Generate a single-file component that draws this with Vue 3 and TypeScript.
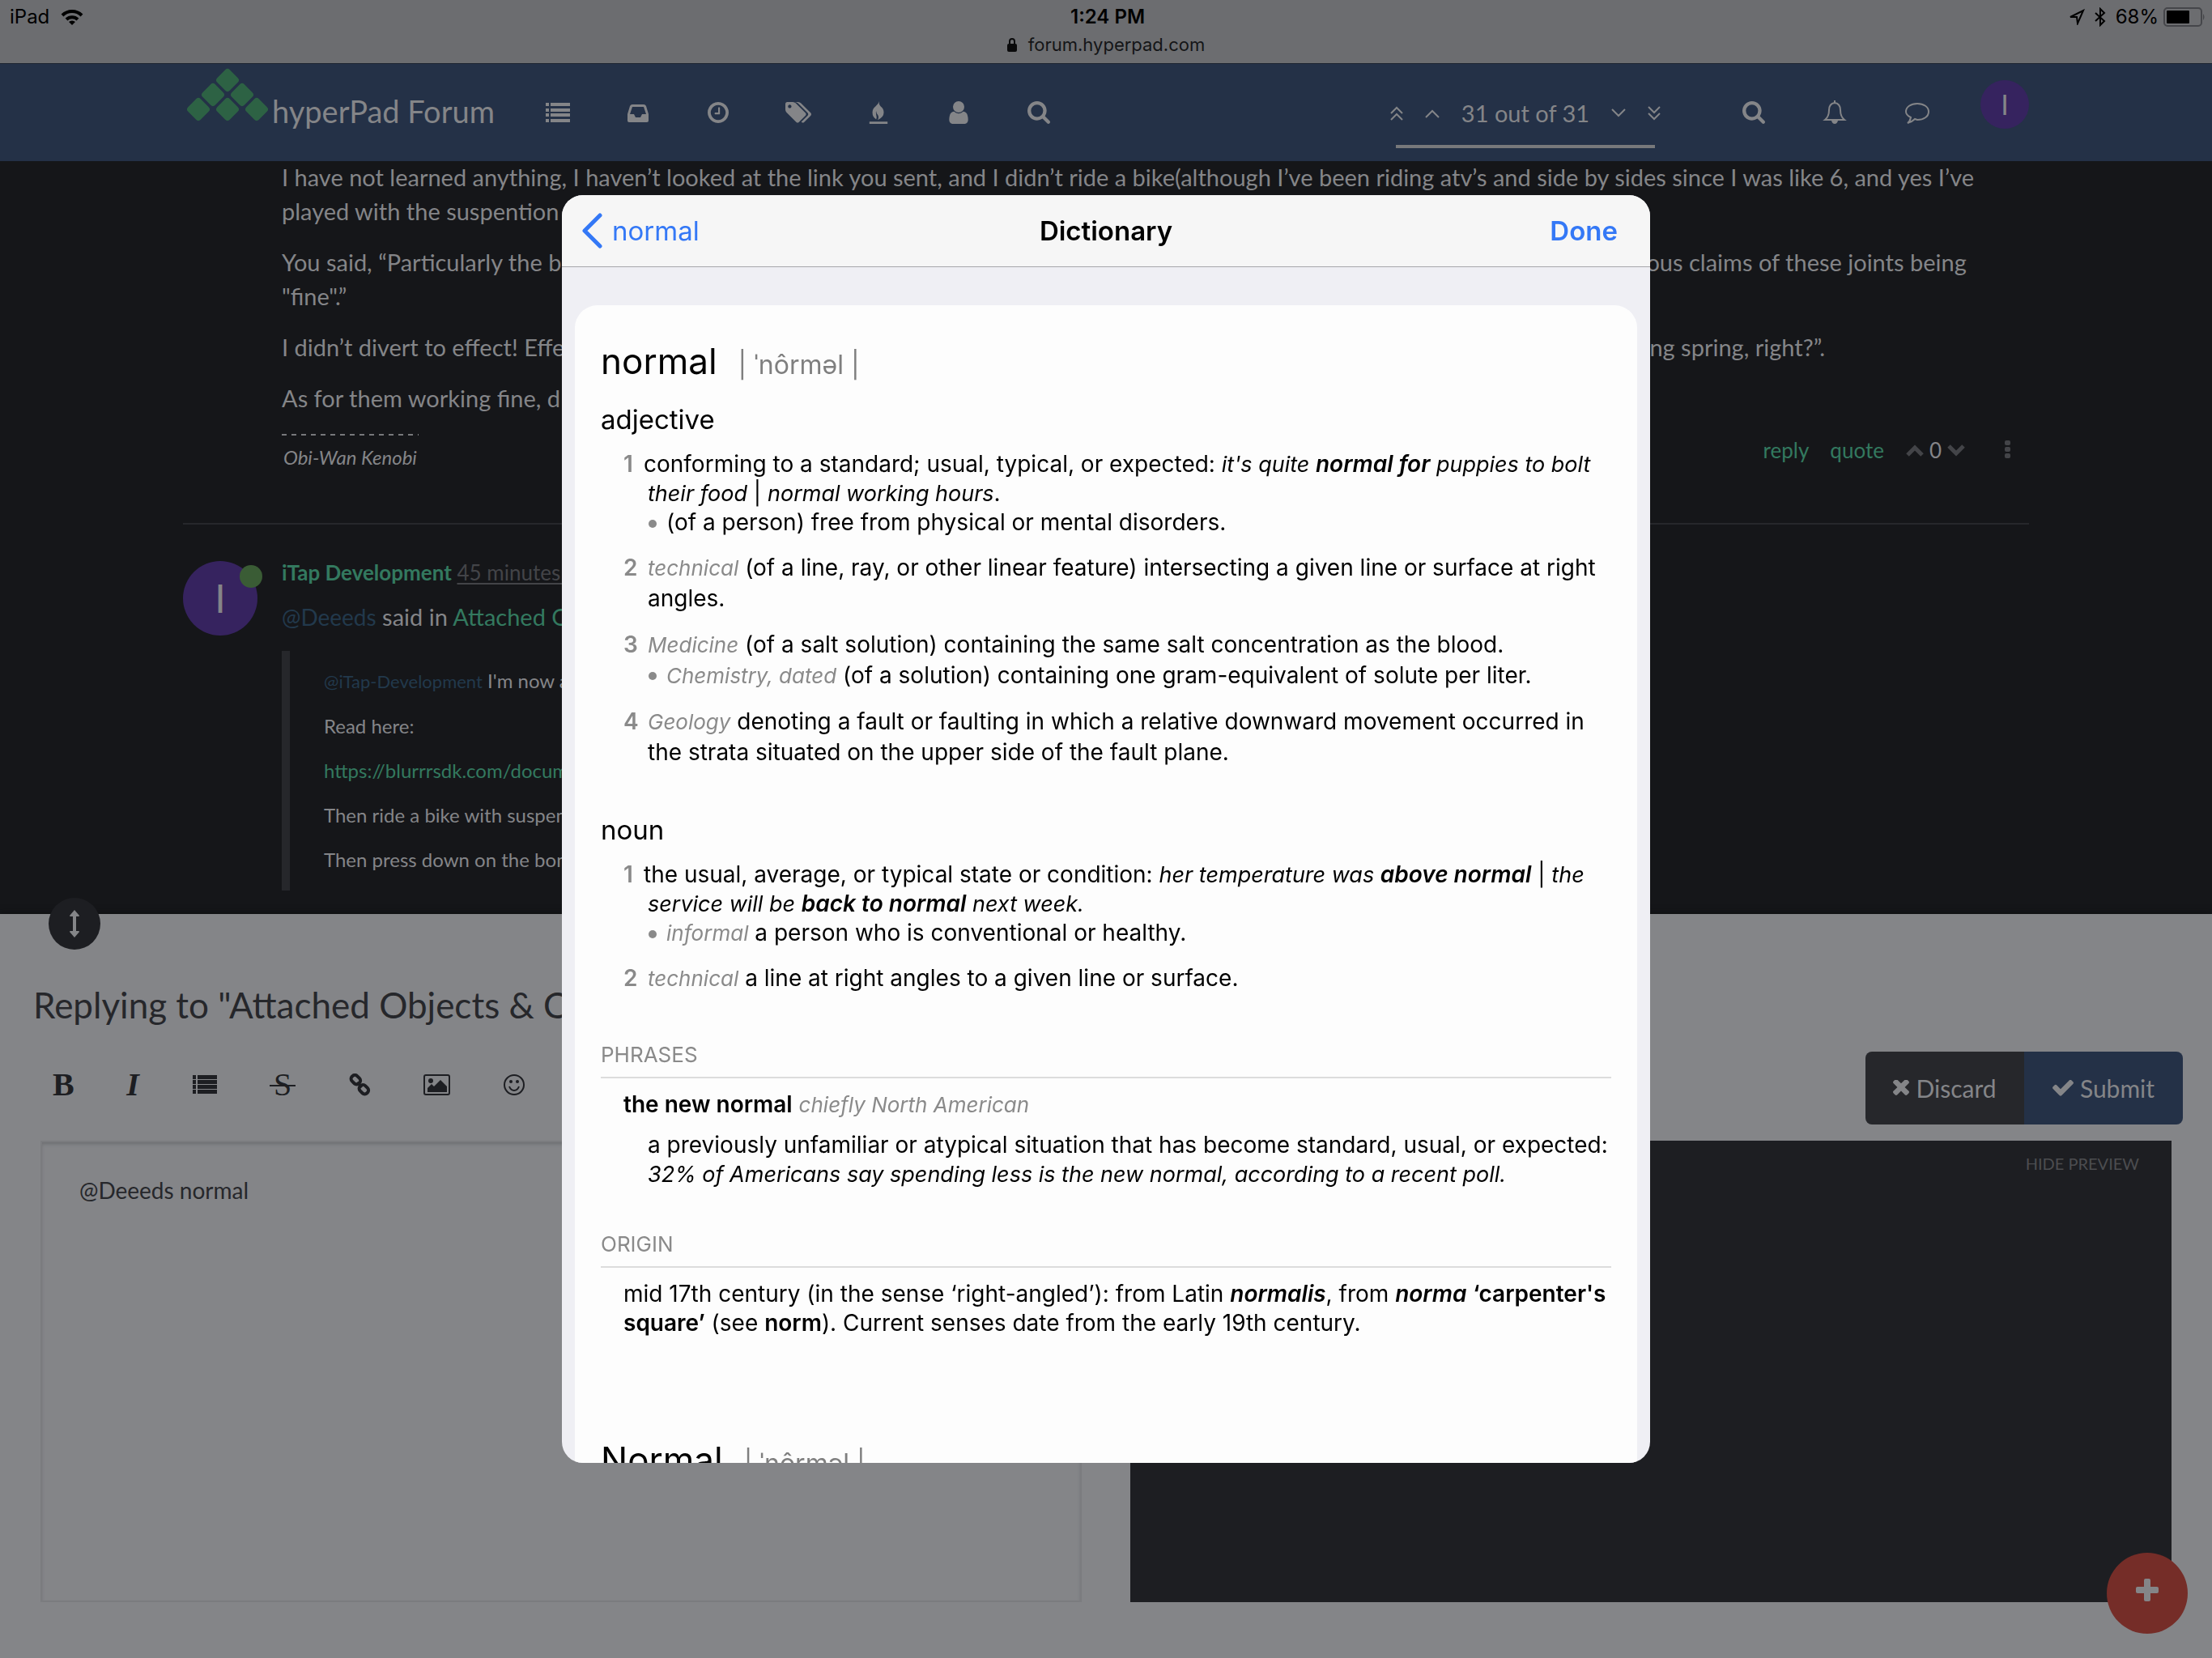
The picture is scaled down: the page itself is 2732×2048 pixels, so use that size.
<script setup lang="ts">
import { ref } from 'vue'

interface Glyph {
  name: string
  box: string
  w: number
  d: string
}

const navItems: Glyph[] = [
  { name: 'Categories', box: '0 0 30 26', w: 30, d: 'M0 1h4v4H0zM6 1h24v4H6zM0 8h4v4H0zM6 8h24v4H6zM0 14h4v4H0zM6 14h24v4H6zM0 21h4v4H0zM6 21h24v4H6z' },
  { name: 'Unread', box: '0 0 26 26', w: 26, d: 'M6 3h14q2 0 3 2l3 10v8q0 2-2 2H2q-2 0-2-2v-8L3 5q1-2 3-2zM6 6 3 15h5l2 4h6l2-4h5l-3-9z' },
  { name: 'Recent', box: '128 128 1536 1536', w: 26, d: 'M1024 544v448q0 14-9 23t-23 9h-320q-14 0-23-9t-9-23v-64q0-14 9-23t23-9h224v-352q0-14 9-23t23-9h64q14 0 23 9t9 23zm416 352q0-148-73-273t-198-198-273-73-273 73-198 198-73 273 73 273 198 198 273 73 273-73 198-198 73-273zm224 0q0 209-103 385.5t-279.5 279.5-385.5 103-385.5-103-279.5-279.5-103-385.5 103-385.5 279.5-279.5 385.5-103 385.5 103 279.5 279.5 103 385.5z' },
  { name: 'Tags', box: '128 128 1900 1536', w: 32, d: 'M576 448q0-53-37.5-90.5t-90.5-37.5-90.5 37.5-37.5 90.5 37.5 90.5 90.5 37.5 90.5-37.5 37.5-90.5zm1067 576q0 53-37 90l-491 492q-39 37-91 37-53 0-90-37l-715-716q-38-37-64.5-101t-26.5-117v-416q0-52 38-90t90-38h416q53 0 117 26.5t102 64.5l715 714q37 39 37 91zm384 0q0 53-37 90l-491 492q-39 37-91 37-36 0-59-14t-53-45l470-470q37-37 37-90 0-52-37-91l-715-714q-38-38-102-64.5t-117-26.5h224q53 0 117 26.5t102 64.5l715 714q37 39 37 91z' },
  { name: 'Popular', box: '0 0 24 30', w: 24, d: 'M0 27h24v3H0zM13 0q-1 4 2 7 4 3 4 8 0 6-8 10 2-4 0-7-2-2-2-5-1 2 0 5 1 3 0 6-5-3-5-9 0-5 4-8 4-3 5-7z' },
  { name: 'Users', box: '256 128 1280 1536', w: 24, d: 'M1536 1399q0 109-62.5 187t-150.5 78h-854q-88 0-150.5-78t-62.5-187q0-85 8.5-160.5t31.5-152 58.5-131 94-89 134.5-34.5q131 128 313 128t313-128q76 0 134.5 34.5t94 89 58.5 131 31.5 152 8.5 160.5zm-256-887q0 159-112.5 271.5t-271.5 112.5-271.5-112.5-112.5-271.5 112.5-271.5 271.5-112.5 271.5 112.5 112.5 271.5z' },
]
const searchPath =
  'M1216 832q0-185-131.5-316.5t-316.5-131.5-316.5 131.5-131.5 316.5 131.5 316.5 316.5 131.5 316.5-131.5 131.5-316.5zm512 832q0 52-38 90t-90 38q-54 0-90-38l-343-342q-179 124-399 124-143 0-273.5-55.5t-225-150-150-225-55.5-273.5 55.5-273.5 150-225 225-150 273.5-55.5 273.5 55.5 225 150 150 225 55.5 273.5q0 220-124 399l343 343q37 37 37 90z'
const diamonds = [
  [51, 15], [33, 33], [69, 33], [15, 51], [51, 51], [87, 51],
]
const draft = ref('@Deeeds normal')
</script>

<template>
  <div class="page">
    <div class="status">
      <div class="status-row">
        <span class="side">iPad
          <svg width="28" height="21" viewBox="0 0 28 21" fill="none" stroke="#000" stroke-width="4"><path d="M2 8a17 17 0 0 1 24 0M7 13a10 10 0 0 1 14 0" /><path d="M14 20l-4-4a6 6 0 0 1 8 0z" fill="#000" stroke="none" /></svg>
        </span>
        <strong class="clock">1:24 PM</strong>
        <span class="side right">
          <svg width="20" height="20" viewBox="0 0 20 20" fill="none" stroke="#000" stroke-width="2"><path d="M2 10 18 2 11 18 10 10z" /></svg>
          <svg class="bt" width="14" height="24" viewBox="0 0 14 24" fill="none" stroke="#000" stroke-width="2"><path d="M1 7l11 10-5 5V2l5 5L1 17" /></svg>
          68%
          <svg class="battery" width="52" height="24" viewBox="0 0 52 24"><rect x="1" y="1" width="46" height="22" rx="4" fill="none" stroke="#45464a" stroke-width="2" /><rect x="4" y="4" width="28" height="16" rx="1" /><path d="M49 8q3 4 0 8z" fill="#45464a" /></svg>
        </span>
      </div>
      <div class="url">
        <svg width="12" height="18" viewBox="0 0 12 18"><path d="M3 8V5a3 3 0 0 1 6 0v3" fill="none" stroke="#0a0a0b" stroke-width="2" /><rect y="8" width="12" height="10" rx="2" fill="#0a0a0b" /></svg>
        forum.hyperpad.com
      </div>
    </div>

    <header class="navbar">
      <a class="brand" href="#">
        <svg class="logo" width="102" height="68" viewBox="0 0 102 68">
          <rect v-for="([x, y], i) in diamonds" :key="i" :x="x - 11" :y="y - 11" width="22" height="22" rx="4" :transform="`rotate(45 ${x} ${y})`" fill="#2d6244" />
        </svg>
        <span>hyperPad Forum</span>
      </a>
      <nav class="nav">
        <a v-for="g in navItems" :key="g.name" href="#" :aria-label="g.name"><svg :width="g.w" height="28" :viewBox="g.box"><path :d="g.d" fill="currentColor" fill-rule="evenodd" /></svg></a>
        <a href="#" aria-label="Search"><svg width="28" height="28" viewBox="64 128 1664 1664"><path :d="searchPath" fill="currentColor" /></svg></a>
      </nav>
      <div class="pager">
        <div class="pager-row">
          <button aria-label="First post"><svg width="18" height="18" viewBox="0 0 18 18"><path class="ln" d="M2 9l7-7 7 7M2 17l7-7 7 7" /></svg></button>
          <button aria-label="Previous post"><svg width="18" height="18" viewBox="0 0 18 18"><path class="ln" d="M1 14l8-8 8 8" /></svg></button>
          <button class="count">31 out of 31</button>
          <button aria-label="Next post"><svg width="18" height="18" viewBox="0 0 18 18"><path class="ln" d="M1 4l8 8 8-8" /></svg></button>
          <button aria-label="Last post"><svg width="18" height="18" viewBox="0 0 18 18"><path class="ln" d="M2 1l7 7 7-7M2 9l7 7 7-7" /></svg></button>
        </div>
        <div class="progress"></div>
      </div>
      <div class="tools">
        <a href="#" aria-label="Search topic"><svg width="28" height="28" viewBox="64 128 1664 1664"><path :d="searchPath" fill="currentColor" /></svg></a>
        <a href="#" aria-label="Notifications"><svg width="30" height="30" viewBox="-1 0 30 30"><path class="ln" d="M14 3q-7 1-7 9 0 8-5 12h24q-5-4-5-12 0-8-7-9z" /><path d="M13 0h2v4h-2zM10 25h8q-1 4-4 4t-4-4z" fill="currentColor" /></svg></a>
        <a href="#" aria-label="Chats"><svg width="32" height="28" viewBox="0 0 32 28"><path class="ln" d="M16 3c8 0 14 4 14 10s-6 10-14 10l-3-1q-4 4-9 5 3-2 4-7-6-3-6-7C2 7 8 3 16 3z" /></svg></a>
      </div>
      <a class="me" href="#">I</a>
    </header>

    <main class="topic">
      <article class="post first">
        <div class="body">
          <p>I have not learned anything, I haven’t looked at the link you sent, and I didn’t ride a bike(although I’ve been riding atv’s and side by sides since I was like 6, and yes I’ve<br>played with the suspention</p>
          <p>You said, “Particularly the b<i class="gap"></i>ous claims of these joints being<br>"fine".”</p>
          <p>I didn’t divert to effect! Effe<i class="gap"></i>ng spring, right?”.</p>
          <p>As for them working fine, d</p>
          <footer class="foot">
            <em class="sig">Obi-Wan Kenobi</em>
            <div class="actions">
              <a href="#">reply</a>
              <a href="#">quote</a>
              <span class="votes">
                <button aria-label="Upvote"><svg width="24" height="18" viewBox="0 0 24 18"><path class="vote" d="M3 15l9-9 9 9" /></svg></button>
                <span>0</span>
                <button aria-label="Downvote"><svg width="24" height="18" viewBox="0 0 24 18"><path class="vote" d="M3 4l9 9 9-9" /></svg></button>
              </span>
              <button aria-label="More"><svg width="8" height="24" viewBox="0 0 8 24" fill="#434448"><rect width="7" height="6" rx="2" /><rect y="8" width="7" height="6" rx="2" /><rect y="16" width="7" height="6" rx="2" /></svg></button>
            </div>
          </footer>
        </div>
      </article>

      <article class="post second">
        <div class="avatar">I<span class="online"></span></div>
        <div class="body">
          <div class="byline"><a class="author" href="#">iTap Development</a> <a class="when" href="#">45 minutes ago</a></div>
          <p><a class="mention" href="#">@Deeeds</a> said in <a href="#">Attached O</a></p>
          <blockquote>
            <p><a class="mention" href="#">@iTap-Development</a> I'm now a</p>
            <p>Read here:</p>
            <p><a href="#">https://blurrrsdk.com/docum</a></p>
            <p>Then ride a bike with suspen</p>
            <p>Then press down on the bon</p>
          </blockquote>
        </div>
      </article>
    </main>

    <section class="composer">
      <button class="resizer" aria-label="Resize"><svg width="14" height="34" viewBox="0 0 14 34" fill="#848588"><path d="M7 0l6 7q0 1-1 1H9v18h3q1 0 1 1l-6 7-6-7q0-1 1-1h3V8H2Q1 8 1 7z" /></svg></button>
      <h2>Replying to "Attached Objects &amp; C</h2>
      <div class="bar">
        <div class="format">
          <button class="glyph b">B</button>
          <button class="glyph i">I</button>
          <button aria-label="List"><svg width="32" height="28" viewBox="0 0 32 28"><path fill="currentColor" d="M1 2h4v5H1zM7 2h24v5H7zM1 8h4v5H1zM7 8h24v5H7zM1 14h4v5H1zM7 14h24v5H7zM1 20h4v5H1zM7 20h24v5H7z" /></svg></button>
          <button class="glyph s">S</button>
          <button aria-label="Link"><svg width="30" height="28" viewBox="-1 0 30 28" fill="none" stroke="currentColor" stroke-width="4"><rect x="3" y="3" width="12" height="9" rx="4" transform="rotate(45 9 8)" /><rect x="13" y="15" width="12" height="9" rx="4" transform="rotate(45 19 20)" /><path d="M11 11l6 6" stroke-width="3" /></svg></button>
          <button aria-label="Image"><svg width="34" height="28" viewBox="0 0 34 28"><rect x="1" y="2" width="31" height="24" rx="2" fill="none" stroke="currentColor" stroke-width="2" /><circle cx="9" cy="9" r="3" fill="currentColor" /><path fill="currentColor" d="M5 23v-5l5-5 3 3 8-8 8 8v7z" /></svg></button>
          <button aria-label="Emoji"><svg width="28" height="28" viewBox="0 0 28 28"><circle cx="14" cy="14" r="12" fill="none" stroke="currentColor" stroke-width="2" /><circle cx="10" cy="10" r="2" fill="currentColor" /><circle cx="18" cy="10" r="2" fill="currentColor" /><path d="M8 16q2 5 6 5t6-5" fill="none" stroke="currentColor" stroke-width="2" /></svg></button>
        </div>
        <div class="submit">
          <button class="discard"><svg width="20" height="20" viewBox="302 430 1188 1188"><path fill="currentColor" d="M1490 1322q0 40-28 68l-136 136q-28 28-68 28t-68-28l-294-294-294 294q-28 28-68 28t-68-28l-136-136q-28-28-28-68t28-68l294-294-294-294q-28-28-28-68t28-68l136-136q28-28 68-28t68 28l294 294 294-294q28-28 68-28t68 28l136 136q28 28 28 68t-28 68l-294 294 294 294q28 28 28 68z" /></svg>Discard</button>
          <button class="send"><svg width="26" height="20" viewBox="121 374 1550 1148"><path fill="currentColor" d="M1671 566q0 40-28 68l-724 724-136 136q-28 28-68 28t-68-28l-136-136-362-362q-28-28-28-68t28-68l136-136q28-28 68-28t68 28l294 295 656-657q28-28 68-28t68 28l136 136q28 28 28 68z" /></svg>Submit</button>
        </div>
      </div>
      <div class="panes">
        <textarea v-model="draft" aria-label="Reply"></textarea>
        <div class="preview"><a href="#">HIDE PREVIEW</a></div>
      </div>
      <button class="fab" aria-label="New"><svg width="28" height="28" viewBox="0 0 28 28" fill="#848588"><rect x="10" width="8" height="28" rx="2" /><rect y="10" width="28" height="8" rx="2" /></svg></button>
    </section>

    <div class="layer">
      <section class="dict" role="dialog" aria-label="Dictionary">
        <header class="dict-bar">
          <button class="back"><svg width="26" height="44" viewBox="0 0 26 44"><path d="M23 3 4 22l19 19" fill="none" stroke="#3478f6" stroke-width="5" stroke-linecap="round" stroke-linejoin="round" /></svg>normal</button>
          <h1>Dictionary</h1>
          <button class="done">Done</button>
        </header>
        <div class="card">
          <div class="head"><span class="word">normal</span><span class="pron">| ˈnôrməl |</span></div>
          <h3>adjective</h3>
          <ol>
            <li><b class="n">1</b><div class="def out">conforming to a standard; usual, typical, or expected: <em>it's quite <b>normal for</b> puppies to bolt</em></div><div class="def"><em>their food</em> | <em>normal working hours</em>.</div><div class="def sub">(of a person) free from physical or mental disorders.</div></li>
            <li class="tall"><b class="n">2</b><div class="def"><em class="lab">technical</em> (of a line, ray, or other linear feature) intersecting a given line or surface at right<br>angles.</div></li>
            <li class="tall"><b class="n">3</b><div class="def"><em class="lab">Medicine</em> (of a salt solution) containing the same salt concentration as the blood.</div><div class="def sub"><em class="lab">Chemistry, dated</em> (of a solution) containing one gram-equivalent of solute per liter.</div></li>
            <li class="tall"><b class="n">4</b><div class="def"><em class="lab">Geology</em> denoting a fault or faulting in which a relative downward movement occurred in<br>the strata situated on the upper side of the fault plane.</div></li>
          </ol>
          <h3 class="noun">noun</h3>
          <ol>
            <li><b class="n">1</b><div class="def out">the usual, average, or typical state or condition: <em>her temperature was <b>above normal</b></em> | <em>the</em></div><div class="def"><em>service will be <b>back to normal</b> next week.</em></div><div class="def sub"><em class="lab">informal</em> a person who is conventional or healthy.</div></li>
            <li class="tall"><b class="n">2</b><div class="def"><em class="lab">technical</em> a line at right angles to a given line or surface.</div></li>
          </ol>
          <h4>PHRASES</h4>
          <div class="phrase"><b>the new normal</b> <em class="lab">chiefly North American</em></div>
          <div class="meaning">a previously unfamiliar or atypical situation that has become standard, usual, or expected:<br><em>32% of Americans say spending less is the new normal, according to a recent poll.</em></div>
          <h4>ORIGIN</h4>
          <div class="phrase">mid 17th century (in the sense ‘right-angled’): from Latin <em><b>normalis</b></em>, from <em><b>norma</b></em> <b>‘carpenter's</b><br><b>square’</b> (see <b>norm</b>). Current senses date from the early 19th century.</div>
          <div class="head next"><span class="word">Normal</span><span class="pron">| ˈnôrməl |</span></div>
        </div>
      </section>
    </div>
  </div>
</template>

<style>
body { margin: 0; }
</style>

<style scoped>
.page {
  display: flex;
  flex-direction: column;
  height: 100vh;
  overflow: hidden;
  background: #151619;
  color: #848588;
  font-family: Lato, "Liberation Sans", sans-serif;
  font-size: 29px;
  line-height: 42px;
}
button {
  padding: 0;
  border: 0;
  background: none;
  color: inherit;
  font: inherit;
}
a { color: #33795f; text-decoration: none; }
p, h1, h2, h3, h4, ol, blockquote { margin: 0; padding: 0; font-weight: 400; }
svg { display: block; flex: none; }
.ln { fill: none; stroke: currentColor; stroke-width: 2; }

.status {
  flex: none;
  height: 78px;
  border-bottom: 1px solid #1c2430;
  background: #6c6d70;
  color: #000;
  font: 24px/42px Inter, "Liberation Sans", sans-serif;
}
.status-row { display: flex; padding: 0 8px 0 12px; }
.side { flex: 1; display: flex; align-items: center; gap: 14px; }
.right { justify-content: flex-end; gap: 12px; }
.battery { margin-left: -6px; }
.clock { font-weight: 600; }
.url {
  display: flex;
  justify-content: center;
  align-items: center;
  gap: 14px;
  line-height: 26px;
  font-size: 22px;
  color: #141517;
}

.navbar {
  flex: none;
  display: flex;
  height: 120px;
  padding: 0 226px;
  background: #243147;
}
.navbar a { color: #848588; }
.brand { display: flex; width: 450px; line-height: 116px; font-size: 38px; }
.logo { margin: 5px 4px 0; }
.nav, .tools { display: flex; align-items: center; }
.nav a { display: flex; justify-content: center; width: 98px; margin-right: 1px; }
.nav { margin-left: -36px; }
.pager { width: 336px; margin: 0 100px 0 auto; }
.pager-row { display: flex; align-items: center; justify-content: space-between; height: 100px; padding-top: 22px; box-sizing: border-box; }
.progress { width: 320px; height: 4px; margin: 0 8px; background: #77787b; }
.tools { gap: 71px; margin-right: 62px; }
.navbar a.me {
  width: 60px;
  height: 60px;
  margin-top: 20px;
  border-radius: 50%;
  background: #36235f;
  text-align: center;
  line-height: 60px;
  font-size: 34px;
}

.topic { flex: 1; min-height: 0; overflow: hidden; padding: 0 226px; }
.post { display: flex; gap: 30px; }
.first { margin-top: -1px; padding: 0 0 61px 122px; border-bottom: 2px solid #26272b; }
.body { flex: 1; min-width: 0; white-space: nowrap; }
.body p { margin-bottom: 21px; }
.gap { display: inline-block; width: 1340px; }
.foot { display: flex; justify-content: space-between; height: 50px; margin-top: 22px; }
.sig {
  height: 48px;
  padding: 0 2px;
  background: repeating-linear-gradient(90deg, #77787b 0 6px, transparent 6px 12px) 0 1px / 100% 2px no-repeat;
  font-size: 24px;
  line-height: 60px;
}
.actions { display: flex; align-items: center; gap: 26px; height: 42px; padding-right: 22px; font-size: 26px; }
.votes { display: flex; align-items: center; gap: 6px; margin-right: 22px; }
.vote { fill: none; stroke: #434448; stroke-width: 5; }
.second { padding-top: 41px; }
.avatar {
  position: relative;
  width: 92px;
  height: 92px;
  margin-top: 4px;
  border-radius: 50%;
  background: #36235f;
  text-align: center;
  font-size: 48px;
  line-height: 92px;
}
.online {
  position: absolute;
  top: 5px;
  right: -6px;
  width: 28px;
  height: 28px;
  border-radius: 50%;
  background: #3a5c35;
}
.byline { margin-bottom: 15px; font-size: 26px; line-height: 37px; }
.author { font-weight: 700; }
.when { color: #434448; text-decoration: underline; text-underline-offset: 3px; }
.mention { color: #22394c; font-size: 28px; }
blockquote .mention { font-size: 22px; }
blockquote { padding: 20px 42px 21px; border-left: 10px solid #26272b; font-size: 24px; line-height: 34px; }
.body blockquote p:last-child { margin-bottom: 0; }

.composer {
  position: relative;
  flex: none;
  padding: 82px 50px 69px;
  background: #848588;
  box-shadow: 0 0 8px #0c0d0f;
  color: #1d1e22;
}
.resizer {
  position: absolute;
  top: -20px;
  left: 60px;
  display: grid;
  place-items: center;
  width: 64px;
  height: 64px;
  border-radius: 50%;
  background: #1d1e22;
}
h2 { margin: 0 -9px 28px; color: #26272b; font-size: 44px; line-height: 60px; white-space: nowrap; }
.bar { display: flex; justify-content: space-between; height: 90px; margin: 0 -14px 20px 15px; }
.format { display: flex; gap: 64px; align-items: center; height: 82px; }
.glyph { font: 700 40px/40px "Liberation Serif", serif; width: 26px; }
.i { width: 18px; font-style: italic; }
.s { position: relative; width: 32px; font-weight: 400; }
.s::after { content: ""; position: absolute; left: 0; right: 0; top: 20px; height: 2px; background: currentColor; }
.submit { display: flex; border-radius: 8px; overflow: hidden; color: #848588; font-size: 30px; }
.submit button { display: flex; align-items: center; justify-content: center; gap: 8px; width: 196px; }
.discard { background: #26272b; }
.send { background: #243147; }
.panes { display: grid; grid-template-columns: 1fr 1fr; gap: 60px; height: 570px; }
textarea {
  box-sizing: border-box;
  padding: 38px 46px;
  border: 2px solid #7b7c7f;
  border-radius: 0;
  background: none;
  box-shadow: inset 0 3px 4px -1px #6c6d70;
  color: #26272b;
  font: 28px/42px Lato, "Liberation Sans", sans-serif;
  resize: none;
}
.preview { padding: 12px 40px; background: #1d1e22; text-align: right; line-height: 32px; }
.preview a { display: block; color: #4c4d50; font-size: 20px; }
.fab {
  position: absolute;
  right: 30px;
  bottom: 30px;
  display: grid;
  place-items: center;
  width: 100px;
  height: 100px;
  padding-bottom: 8px;
  border-radius: 50%;
  background: #752d28;
}

.layer { position: fixed; inset: 0; display: grid; place-items: center; }
.dict {
  display: flex;
  flex-direction: column;
  width: 1344px;
  height: 1566px;
  max-height: 100%;
  overflow: hidden;
  border-radius: 26px;
  background: #efeff4;
  color: #000;
  font: 28px/36px Inter, "Liberation Sans", sans-serif;
}
.dict-bar {
  flex: none;
  display: grid;
  grid-template-columns: 1fr auto 1fr;
  align-items: center;
  height: 88px;
  padding: 0 24px;
  border-bottom: 1px solid #a7a7ab;
  background: #f6f6f6;
  font-size: 33px;
  line-height: 44px;
}
.back { display: flex; align-items: center; gap: 12px; color: #3478f6; }
h1 { font-size: 33px; font-weight: 600; }
.done { justify-self: end; margin-right: 16px; color: #3478f6; font-weight: 600; }
.card {
  flex: 1;
  min-height: 0;
  overflow: hidden;
  margin: 47px 16px 0;
  padding: 39px 32px 0;
  border-radius: 28px 28px 0 0;
  background: #fdfdfd;
  white-space: nowrap;
}
.head { display: flex; align-items: baseline; gap: 26px; line-height: 60px; }
.word { font-size: 44px; }
.pron { color: #7f7f7f; font-size: 32px; }
h3 { margin: 15px 0; font-size: 33px; line-height: 44px; }
h3.noun { margin-top: 48px; }
ol { display: grid; gap: 19px; list-style: none; padding: 0 0 7px 28px; }
li { position: relative; padding-left: 30px; }
.tall { line-height: 38px; }
.n { position: absolute; left: 0; top: 0; color: #8a8a8a; }
.out { margin-left: -5px; }
.sub { position: relative; padding-left: 23px; }
.sub::before { content: ""; position: absolute; left: 1px; top: 15px; width: 10px; height: 10px; border-radius: 50%; background: #8a8a8a; }
b { font-weight: 600; }
.dict em { font-size: 27px; line-height: 28px; }
.dict em b { font-size: 28px; }
.dict em.lab { color: #8a8a8a; font-size: 26px; }
h4 { margin: 51px 0 14px; padding-bottom: 9px; border-bottom: 2px solid #dcdcdc; color: #8a8a8a; font-size: 26px; line-height: 36px; }
.phrase { padding-left: 28px; }
.meaning { margin: 14px 0 0 58px; }
.next { margin-top: 121px; }
</style>
